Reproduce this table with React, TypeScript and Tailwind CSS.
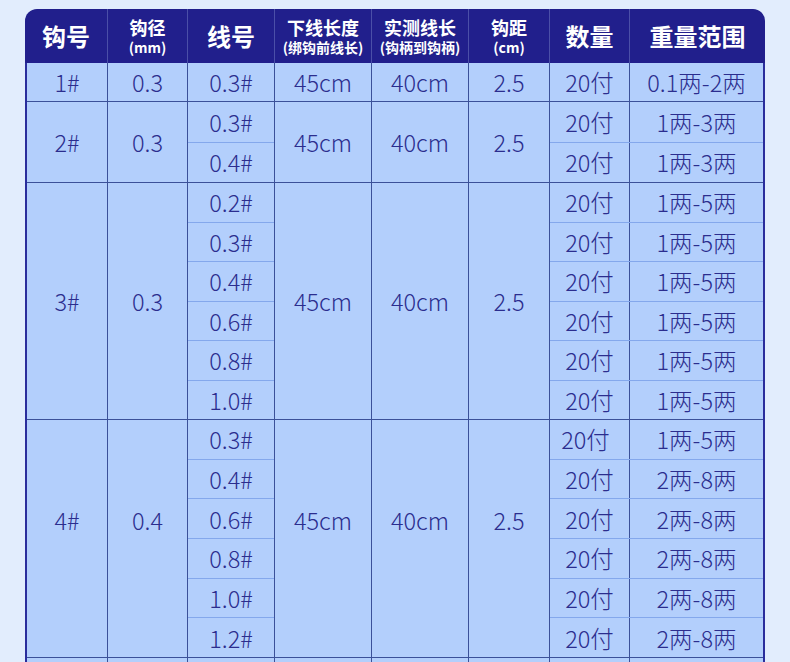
type Group = {
  hook: string;
  dia: string;
  lines: string[];
  len: string;
  real: string;
  gap: string;
  rows: [string, string][];
  height: string;
  shift?: string;
};

const GROUPS: Group[] = [
  {
    hook: "1#",
    dia: "0.3",
    lines: ["0.3#"],
    len: "45cm",
    real: "40cm",
    gap: "2.5",
    rows: [["20付", "0.1两-2两"]],
    height: "h-[39px]",
  },
  {
    hook: "2#",
    dia: "0.3",
    lines: ["0.3#", "0.4#"],
    len: "45cm",
    real: "40cm",
    gap: "2.5",
    rows: [
      ["20付", "1两-3两"],
      ["20付", "1两-3两"],
    ],
    height: "h-[81px]",
  },
  {
    hook: "3#",
    dia: "0.3",
    lines: ["0.2#", "0.3#", "0.4#", "0.6#", "0.8#", "1.0#"],
    len: "45cm",
    real: "40cm",
    gap: "2.5",
    rows: [
      ["20付", "1两-5两"],
      ["20付", "1两-5两"],
      ["20付", "1两-5两"],
      ["20付", "1两-5两"],
      ["20付", "1两-5两"],
      ["20付", "1两-5两"],
    ],
    height: "h-[237px]",
  },
  {
    hook: "4#",
    dia: "0.4",
    lines: ["0.3#", "0.4#", "0.6#", "0.8#", "1.0#", "1.2#"],
    len: "45cm",
    real: "40cm",
    gap: "2.5",
    rows: [
      ["20付", "1两-5两"],
      ["20付", "2两-8两"],
      ["20付", "2两-8两"],
      ["20付", "2两-8两"],
      ["20付", "2两-8两"],
      ["20付", "2两-8两"],
    ],
    height: "h-[238px]",
    // the merged cells of this block sit higher than its middle
    shift: "pb-[38px]",
  },
  {
    hook: "5#",
    dia: "0.4",
    lines: ["0.4#", "0.6#", "0.8#"],
    len: "45cm",
    real: "40cm",
    gap: "2.5",
    rows: [
      ["20付", "2两-8两"],
      ["20付", "2两-8两"],
      ["20付", "2两-8两"],
    ],
    height: "h-[119px]",
  },
];

function HeaderCell({
  title,
  sub,
  width,
  big,
}: {
  title: string;
  sub?: string;
  width: string;
  big?: boolean;
}) {
  return (
    <div
      className={`${width} flex h-full shrink-0 flex-col items-center justify-center border-r border-[#4b4fa8] last:border-r-0`}
    >
      <span
        className={
          big
            ? "text-[24px] leading-[28px] font-bold"
            : "text-[18px] leading-[19px] font-bold"
        }
      >
        {title}
      </span>
      {sub && (
        <span className="mt-[3px] text-[14px] leading-[15px] font-bold">
          {sub}
        </span>
      )}
    </div>
  );
}

function SpanCell({
  width,
  text,
  shift = "",
}: {
  width: string;
  text: string;
  shift?: string;
}) {
  return (
    <div
      className={`${width} ${shift} flex h-full shrink-0 items-center justify-center border-r border-[#3b5199]`}
    >
      {text}
    </div>
  );
}

export default function App() {
  return (
    <div className="h-[662px] w-[790px] overflow-hidden bg-[#e2edfd] px-[25px] pt-[9px] font-['Noto_Sans_CJK_SC','Noto_Sans',sans-serif]">
      {/* Header */}
      <div className="flex h-[54px] w-[740px] rounded-t-[12px] bg-[#211f8c] text-white">
        <HeaderCell title="钩号" width="w-[83px]" big />
        <HeaderCell title="钩径" sub="(mm)" width="w-[80px]" />
        <HeaderCell title="线号" width="w-[87px]" big />
        <HeaderCell title="下线长度" sub="(绑钩前线长)" width="w-[97px]" />
        <HeaderCell title="实测线长" sub="(钩柄到钩柄)" width="w-[97px]" />
        <HeaderCell title="钩距" sub="(cm)" width="w-[81px]" />
        <HeaderCell title="数量" width="w-[80px]" big />
        <HeaderCell title="重量范围" width="flex-1" big />
      </div>

      {/* Body */}
      <div className="w-[740px] border-x-2 border-[#2a2d9c] bg-[#b3cffc] text-[23.5px] leading-[28px] font-light text-[#2b2d8e]">
        {GROUPS.map((g, gi) => (
          <div
            key={g.hook}
            className={`${g.height} flex border-b border-[#3b5199]`}
          >
            <SpanCell width="w-[81px]" text={g.hook} shift={g.shift} />
            <SpanCell width="w-[80px]" text={g.dia} shift={g.shift} />
            <div className="flex h-full w-[87px] shrink-0 flex-col border-r border-[#3b5199]">
              {g.lines.map((l, i) => (
                <div
                  key={i}
                  className="flex flex-1 items-center justify-center border-b border-[#84a8ec] last:border-b-0"
                >
                  {l}
                </div>
              ))}
            </div>
            <SpanCell width="w-[97px]" text={g.len} shift={g.shift} />
            <SpanCell width="w-[97px]" text={g.real} shift={g.shift} />
            <SpanCell width="w-[81px]" text={g.gap} shift={g.shift} />
            <div className="flex h-full flex-1 flex-col">
              {g.rows.map(([qty, range], i) => (
                <div
                  key={i}
                  className="flex flex-1 border-b border-[#84a8ec] last:border-b-0"
                >
                  <div
                    className={`flex w-[80px] shrink-0 items-center justify-center border-r border-[#3b5199] ${
                      gi === 3 && i === 0 ? "pr-[8px]" : ""
                    }`}
                  >
                    {qty}
                  </div>
                  <div className="flex flex-1 items-center justify-center">
                    {range}
                  </div>
                </div>
              ))}
            </div>
          </div>
        ))}
      </div>
    </div>
  );
}
